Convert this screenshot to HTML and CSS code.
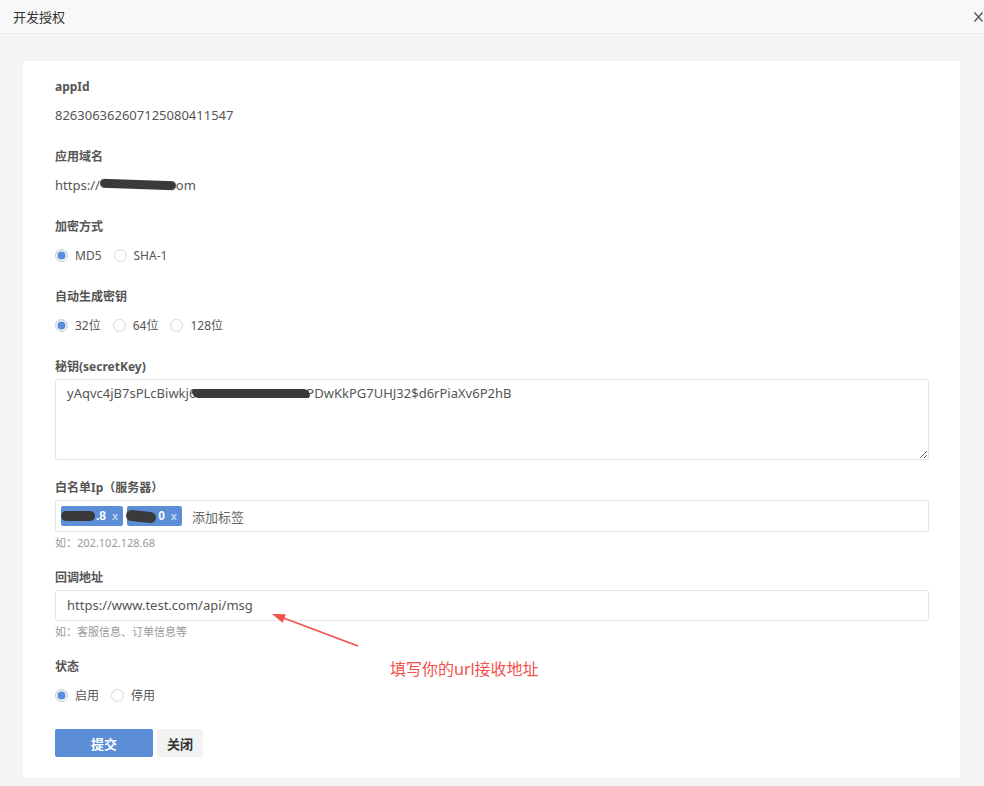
FILE: index.html
```html
<!DOCTYPE html>
<html lang="zh-CN">
<head>
  <meta charset="UTF-8">
  <meta name="viewport" content="width=device-width, initial-scale=1.0">
  <title>开发授权</title>
  <link rel="stylesheet" href="styles.css">
</head>
<body>
  <div class="dialog-header">
    <span class="dialog-title">开发授权</span>
    <span class="dialog-close">
      <svg width="9" height="10" viewBox="0 0 9 10"><path d="M0.5 0.5 L8.5 9.5 M8.5 0.5 L0.5 9.5" stroke="#555" stroke-width="1.4" fill="none"/></svg>
    </span>
  </div>

  <div class="page">
    <div class="card">
      <div class="field">
        <div class="label">appId</div>
        <div class="value">826306362607125080411547</div>
      </div>

      <div class="field">
        <div class="label">应用域名</div>
        <div class="value">https://<span class="scribble scribble-domain"></span>om</div>
      </div>

      <div class="field">
        <div class="label">加密方式</div>
        <div class="radios">
          <span class="radio checked"><i></i>MD5</span>
          <span class="radio"><i></i>SHA-1</span>
        </div>
      </div>

      <div class="field">
        <div class="label">自动生成密钥</div>
        <div class="radios">
          <span class="radio checked"><i></i>32位</span>
          <span class="radio"><i></i>64位</span>
          <span class="radio"><i></i>128位</span>
        </div>
      </div>

      <div class="field field-input field-secret">
        <div class="label">秘钥(secretKey)</div>
        <div class="textarea">yAqvc4jB7sPLcBiwkj6<span class="scribble scribble-key"></span>PDwKkPG7UHJ32$d6rPiaXv6P2hB</div>
      </div>

      <div class="field field-input">
        <div class="label">白名单Ip（服务器）</div>
        <div class="tags-input">
          <span class="tag"><span class="scribble scribble-tag1"></span>.8<span class="tag-x">x</span></span>
          <span class="tag"><span class="scribble scribble-tag2"></span>0<span class="tag-x">x</span></span>
          <span class="tag-placeholder">添加标签</span>
        </div>
        <div class="hint">如：202.102.128.68</div>
      </div>

      <div class="field field-input">
        <div class="label">回调地址</div>
        <div class="input">https://www.test.com/api/msg</div>
        <div class="hint">如：客服信息、订单信息等</div>
      </div>

      <div class="field">
        <div class="label">状态</div>
        <div class="radios">
          <span class="radio checked"><i></i>启用</span>
          <span class="radio"><i></i>停用</span>
        </div>
      </div>

      <div class="buttons">
        <button class="btn btn-primary">提交</button>
        <button class="btn btn-default">关闭</button>
      </div>

      <!-- annotation drawn over the form -->
      <div class="annotation">
        <svg class="annotation-arrow" width="100" height="50" viewBox="0 0 100 50">
          <path d="M90 41 L13 12" stroke="#f0524c" stroke-width="1.6" fill="none"/>
          <path d="M4 9 L17.8 9.3 L14.6 17.7 Z" fill="#f0524c"/>
        </svg>
        <span class="annotation-text">填写你的url接收地址</span>
      </div>
    </div>
  </div>
</body>
</html>
```

FILE: styles.css
```css
body {
  margin: 0;
  font-family: "Noto Sans", "Noto Sans CJK SC", sans-serif;
  font-size: 13px;
  color: #555;
  background: #f4f4f4;
}
.dialog-header {
  height: 33px;
  background: #f8f8f8;
  border-bottom: 1px solid #eaeaea;
  display: flex;
  align-items: center;
  justify-content: space-between;
  padding: 0 1px 0 13px;
}
.dialog-title {
  font-size: 13px;
  color: #333;
}
.dialog-close {
  display: flex;
  margin-top: 1px;
}
.page {
  padding: 27px 24px 8px 23px;
}
.card {
  position: relative;
  background: #fff;
  padding: 16px 31px 21px 32px;
}
.field {
  margin-bottom: 22px;
}
.field-input {
  margin-bottom: 17px;
}
.field-secret {
  margin-bottom: 18px;
}
.label {
  font-size: 12px;
  font-weight: bold;
  color: #555;
  line-height: 20px;
  margin-bottom: 8px;
}
.field-input .label {
  margin-bottom: 2px;
}
.value {
  font-size: 13px;
  line-height: 20px;
  color: #555;
}
.radios {
  display: flex;
  align-items: center;
  height: 20px;
  font-size: 12px;
  color: #555;
}
.radio {
  display: flex;
  align-items: center;
  margin-right: 12px;
}
.radio i {
  width: 11px;
  height: 11px;
  border: 1px solid #d8d8d8;
  border-radius: 50%;
  margin-right: 7px;
  background: #fff;
}
.radio.checked i {
  background: #5b8ed6;
  box-shadow: inset 0 0 0 1.5px #fff;
}
.textarea {
  height: 67px;
  border: 1px solid #e6e6e6;
  border-radius: 2px;
  padding: 4px 11px 8px;
  line-height: 18px;
  font-size: 13px;
  color: #555;
  resize: vertical;
  overflow: auto;
}
.tags-input {
  height: 30px;
  border: 1px solid #e6e6e6;
  border-radius: 2px;
  display: flex;
  align-items: center;
  padding: 0 5px;
}
.tag {
  display: inline-flex;
  align-items: center;
  height: 20px;
  background: #5b8ed6;
  color: #fff;
  font-family: "Liberation Sans", sans-serif;
  font-weight: bold;
  font-size: 12px;
  border-radius: 2px;
  margin-right: 4px;
  padding-right: 5px;
}
.tag-x {
  color: #c3d5ef;
  margin-left: 6px;
  font-size: 11px;
}
.tag-placeholder {
  margin-left: 6px;
  font-size: 13px;
  color: #666;
}
.hint {
  font-size: 11px;
  color: #999;
  line-height: 16px;
  margin-top: 3px;
}
.input {
  height: 29px;
  line-height: 29px;
  border: 1px solid #e6e6e6;
  border-radius: 2px;
  padding: 0 11px;
  font-size: 13px;
  color: #555;
}
.scribble {
  display: inline-block;
  background: #3a3a3a;
  border-radius: 6px;
  vertical-align: middle;
  filter: blur(0.6px);
}
.scribble-domain {
  width: 76px;
  height: 9px;
  margin-top: -4px;
  transform: rotate(2deg);
}
.scribble-key {
  width: 118px;
  height: 9px;
  margin: -3px -4px 0;
  border-radius: 3px 8px 3px 8px;
}
.scribble-tag1 {
  width: 34px;
  height: 10px;
  margin-right: 1px;
}
.scribble-tag2 {
  width: 30px;
  height: 11px;
  margin: 0 2px 0 -1px;
  transform: rotate(6deg);
}
.buttons {
  display: flex;
  gap: 4px;
  margin-top: 24px;
}
.btn {
  height: 28px;
  border: none;
  border-radius: 2px;
  font-family: "Noto Sans CJK SC", sans-serif;
  font-size: 13px;
  font-weight: bold;
  padding: 0;
}
.btn-primary {
  width: 98px;
  background: #5b8ed6;
  color: #fff;
}
.btn-default {
  width: 46px;
  background: #f2f2f2;
  color: #333;
}
.annotation {
  position: absolute;
  left: 245px;
  top: 544px;
}
.annotation-arrow {
  display: block;
}
.annotation-text {
  position: absolute;
  left: 122px;
  top: 51px;
  white-space: nowrap;
  font-size: 16px;
  color: #f5504c;
}
```
